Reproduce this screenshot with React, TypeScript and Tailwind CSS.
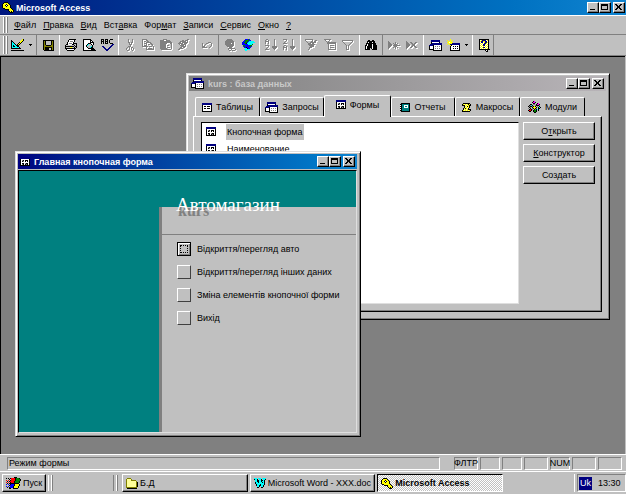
import { ReactNode } from 'react';
import { cva } from 'class-variance-authority';
import clsx from 'clsx';

const PALETTE: Record<string, string> = {
  k: '#000000',
  w: '#ffffff',
  g: '#808080',
  s: '#c0c0c0',
  n: '#000080',
  b: '#0000ff',
  t: '#008080',
  c: '#00ffff',
  y: '#ffff00',
  p: '#ffff99',
  o: '#808000',
  r: '#ff0000',
  e: '#008000',
  m: '#ff00ff',
};

// Each icon is a small bitmap, one letter of the palette per pixel
const ICONS = {
  key: [
    '..kkkk......',
    '.kyyyyk.....',
    'kyyykyyk....',
    'kyykwkyyk...',
    'kyyykyyyk...',
    'kyyyyyyyk...',
    '.kkyyyyyyk..',
    '...kkkkyyyk.',
    '......kyyyyk',
    '.......kykyk',
    '........kkk.',
  ],
  design: [
    '...........yk',
    'k.........yyk',
    'kk.......yyk.',
    'kck.....kyk..',
    'kcck...kyk...',
    'kccck.kyk....',
    'kckcckkk.....',
    'kckkcckk.....',
    'kccccccck....',
    'kkkkkkkkkk...',
    '.............',
    'kkkkkkkkkkkkk',
  ],
  save: [
    'kkkkkkkkkkk',
    'kokssssskok',
    'kokssssskok',
    'kokssssskok',
    'kokssssskok',
    'kookkkkkook',
    'koooooooook',
    'kokkkkkkkok',
    'kokkkksskok',
    'kokkkksskok',
    '.kkkkkkkkkk',
  ],
  print: [
    '....kkkkkkk..',
    '...kwwwwwk...',
    '...kwgggwk...',
    '..kwwwwwk....',
    '..kwgggwkkkk.',
    '.kkwwwwkkssk.',
    'kssssssssksk.',
    'kkkkkkkkkskk.',
    'kssssyyssksk.',
    'kkkkkkkkkkk..',
    '.kwwwwwwwk...',
    '..kkkkkkk....',
  ],
  preview: [
    'kkkkkkkk.....',
    'kwwwwwwkk....',
    'kwwwwwwkwk...',
    'kwwwwwwkkkk..',
    'kwwwwkkkwwk..',
    'kwwwkcsskwk..',
    'kwwkcssssk...',
    'kwwkssssck...',
    'kwwwkssckk...',
    'kwwwwkkkkkk..',
    'kwwwwwwwkkkk.',
    'kkkkkkkkkkkkk',
  ],
  spelling: [
    'kkk.kkk..kkk.',
    'k.k.k.k.k....',
    'kkk.kkk.k....',
    'k.k.k.k.k....',
    'k.k.kkk..kkk.',
    '...........nn',
    '..........nn.',
    '.nn......nn..',
    '..nn....nn...',
    '...nn..nn....',
    '....nnnn.....',
    '.....nn......',
  ],
  cut: [
    '..g...g.',
    '..g...g.',
    '..g...g.',
    '..gg.gg.',
    '...g.g..',
    '...ggg..',
    '....g...',
    '..ggg...',
    '.g.g.gg.',
    'g..g.g.g',
    'g..g.g.g',
    '.gg...g.',
  ],
  copy: [
    'ggggg.......',
    'g...gg......',
    'g.gg.gg.....',
    'g...ggggg...',
    'g.ggg...gg..',
    'g...g.gg.gg.',
    'g.ggg.....g.',
    'gggggg.ggg.g',
    '....g......g',
    '....g.gggg.g',
    '....gggggggg',
  ],
  paste: [
    '...gggg.....',
    'gggg..gggg..',
    'ggggggggggg.',
    'gggggggggggg',
    'ggggggg...gg',
    'gggggg.....g',
    'gggggg.gg..g',
    'gggggg.....g',
    'gggggg.ggg.g',
    'ggggggg....g',
    '.gggggggggg.',
  ],
  painter: [
    '.........gg.',
    '....gg.ggg..',
    '..gggggg.g..',
    '.gg.gggggg..',
    'ggggg.ggg...',
    '.g.ggggg....',
    '..gggg.g....',
    '...ggggg....',
    '..gg.gg.....',
    '.gggg.......',
    'gg..........',
  ],
  undo: [
    '......ggg.',
    'g...gg...g',
    'g..g.....g',
    'g.g......g',
    'ggg.....g.',
    'ggggg..g..',
  ],
  link: [
    '...ggggg....',
    '..ggggggg...',
    '.ggggggggg..',
    '.ggggggggg..',
    '.gggggg.gg..',
    '.ggggggggg..',
    '..gggggggg..',
    '...gggggg...',
    '.....ggg....',
    '....ggggggg.',
    '....g..g...g',
    '.....gg.ggg.',
  ],
  web: [
    '...bbbeb.....',
    '..beeeebb....',
    '.bbeeebccccc.',
    'bbeeebccccccc',
    'bbbekcccccc..',
    'bbbbbbcccce..',
    '.eebbbbbee...',
    '.bebbbbeeb...',
    '..bbkbbbb....',
    '...cckbb.....',
    '..cccccc.....',
    '...cc........',
  ],
  sortAsc: [
    '.gg......g..',
    'g..g.....g..',
    'gggg.....g..',
    'g..g.....g..',
    'g..g.....g..',
    '.........g..',
    'gggg.....g..',
    '...g...ggggg',
    '..g....ggggg',
    '.g......ggg.',
    'gggg.....g..',
  ],
  sortDesc: [
    'gggg.....g..',
    '...g.....g..',
    '..g......g..',
    '.g.......g..',
    'gggg.....g..',
    '.........g..',
    '.gg......g..',
    'g..g...ggggg',
    'gggg...ggggg',
    'g..g....ggg.',
    'g..g.....g..',
  ],
  filterSel: [
    'gggggggg.....',
    'g......g..gg.',
    '.g....gg.gg..',
    '..g..gggggg..',
    '...ggg.gg....',
    '...ggggggg...',
    '....ggggg....',
    '.....gggg....',
    '....ggg......',
    '....g........',
    '...g.........',
  ],
  filterForm: [
    'ggggggg.....',
    '.g...g......',
    '..g.g.......',
    '...ggggggggg',
    '...ggggggggg',
    '....g......g',
    '....g.gggg.g',
    '....g......g',
    '....g.gggg.g',
    '....g......g',
    '....gggggggg',
  ],
  filter: [
    'ggggggggggg',
    'g.........g',
    '.g.......g.',
    '..g.....g..',
    '...g...g...',
    '....g.g....',
    '....g.g....',
    '....g.g....',
    '....g.g....',
    '....ggg....',
  ],
  find: [
    '...kk..kk...',
    '..kkkkkkkk..',
    '..kwkkkwkk..',
    '.kkkkkkkkkk.',
    '.kwkkkkwkkk.',
    'kkwkkkkwkkkk',
    'kwkkkkkwkkkk',
    'kwkkkkkwkkkk',
    'kwkkk.kwkkkk',
    'kkkkk..kkkkk',
  ],
  newRecord: [
    'g...........',
    'gg.....g....',
    'ggg..g.g.g..',
    'gggg..ggg...',
    'gggg.ggggggg',
    'ggg...ggg...',
    'gg...g.g.g..',
    'g......g....',
  ],
  deleteRecord: [
    'g...........',
    'gg..gg...gg.',
    'ggg..gg.gg..',
    'gggg..ggg...',
    'gggg..ggg...',
    'ggg..gg.gg..',
    'gg..gg...gg.',
    'g...........',
  ],
  database: [
    '..nnnnnnnnn..',
    '..nnnnnnnnn..',
    '..kwwwwwwwk..',
    '..knnnnnnnnnn',
    '.nnnnnnnnnnnn',
    'nnnnkwwwwwwwk',
    'kwwwkwgwgwgwk',
    'kwwwkwwwwwwwk',
    'kwwwkwgwgwgwk',
    'kkkkkwwwwwwwk',
    '....kkkkkkkkk',
  ],
  newObject: [
    '...y.........',
    'y..y.y.......',
    '.yyyy........',
    'yywyyy.......',
    '.yyyynnnnnnnn',
    'y.ynnnnnnnnnn',
    '...ykwwwwwwwk',
    '...kwwkwkwkwk',
    '...kwwwwwwwwk',
    '...kwwkwkwkwk',
    '...kwwwwwwwwk',
    '...kkkkkkkkkk',
  ],
  help: [
    'kkkkkkkkkk.',
    'kwynnnnwyk.',
    'kynnyynnwk.',
    'kwnnwynnyk.',
    'kywywnnywk.',
    'kwywnnywyk.',
    'kywynnwywk.',
    'kwywywywyk.',
    'kywynnwywk.',
    'kwywywywyk.',
    'kkkkkkkkkkk',
    '......kwk..',
    '.......kk..',
  ],
  table: [
    'nnnnnnnnnn',
    'nnnnnnnnnn',
    'kwwwwwwwwk',
    'kwkkwkkkwk',
    'kwwwwwwwwk',
    'kwkkwkkkwk',
    'kwwwwwwwwk',
    'kwwwwwwwwk',
    'kkkkkkkkkk',
  ],
  form: [
    'nnnnnnnnnn',
    'nnnnnnnnnn',
    'kwwwwwwwwk',
    'kwgkwkkkwk',
    'kwkgwkwkwk',
    'kwwwwwwwwk',
    'kwkkwgkkwk',
    'kwgkwkgkwk',
    'kkkkkkkkkk',
  ],
  report: [
    '.kkkkkkkkk',
    'kktttttttk',
    'wkttwwwwtk',
    'kkttwttwtk',
    'wkttwwwwtk',
    'kktttttttk',
    'wktttttttk',
    'kktttttttk',
    '.kkkkkkkkk',
  ],
  macro: [
    '.kkkkkkk..',
    'kypypykyk.',
    'kkkpypykk.',
    '..kypkyk..',
    '..kpypyk..',
    '.kykypk...',
    '.kpypykkk.',
    'kypypypyk.',
    'kkkkkkkk..',
  ],
  module: [
    '.....km......',
    '....kmmk.....',
    '.....kk..km..',
    '..kk.gg.kmmk.',
    '.kgck..gkkkg.',
    'kgkkgkyk.g.k.',
    '.kg.kyyyk.kck',
    'g.k.gkykg.kk.',
    '.krkg.kgkck..',
    'krrk.keek.k..',
    '.kk..keek....',
    '......kk.....',
  ],
  windows: [
    '........kkk....',
    'k.k.krrrrkeeek.',
    '...k.rrrrkeeeek',
    'r.r.krrrrkeeeek',
    '.k.krrrrkeeeek.',
    'r.r.krrrkeeeek.',
    '.k.kkkkkkkkkk..',
    'b.b.kbbbkyyyyk.',
    '...kbbbbkyyyyk.',
    'b.b.bbbkyyyyk..',
    '.k.kbbbkyyyyk..',
    '...kk..kkkkk...',
  ],
  folder: [
    '.oooo.......',
    'oppppo......',
    'oppppooooo..',
    'opppppppppo.',
    'opppppppppok',
    'opppppppppok',
    'opppppppppok',
    'opppppppppok',
    'opppppppppok',
    'ooooooooooo.',
    '.kkkkkkkkkk.',
  ],
  word: [
    'ccc.ccc.cccc',
    'kcck.cck.cck',
    '.cckkcckkck.',
    '.cckkcckcck.',
    '.kcckccckck.',
    '.kcccccccck.',
    '..kccckccck.',
    '..kcckkcck..',
    '...cck.cck..',
    '...kk..kk...',
  ],
};

type IconName = keyof typeof ICONS;

interface PixelIconProps {
  name: IconName;
  disabled?: boolean;
}

function PixelIcon({ name, disabled }: PixelIconProps) {
  const rows: string[] = ICONS[name];
  const width = Math.max(...rows.map((row) => row.length)) + (disabled ? 1 : 0);
  const height = rows.length + (disabled ? 1 : 0);

  const draw = (offset: number, fill?: string) =>
    rows.flatMap((row, y) =>
      [...row].map((char, x) =>
        char === '.' ? null : (
          <rect
            key={`${offset}-${x}-${y}`}
            x={x + offset}
            y={y + offset}
            width="1"
            height="1"
            fill={fill || PALETTE[char]}
          />
        )
      )
    );

  return (
    <svg
      width={width}
      height={height}
      viewBox={`0 0 ${width} ${height}`}
      shapeRendering="crispEdges"
      className="shrink-0"
      aria-hidden="true"
    >
      {disabled && draw(1, '#ffffff')}
      {draw(0)}
    </svg>
  );
}

const raised =
  'border border-t-white border-l-white border-r-black border-b-black shadow-[inset_-1px_-1px_0_#808080]';
const sunken = 'border border-t-[#808080] border-l-[#808080] border-r-white border-b-white';

function CaptionButtons() {
  const button = clsx('flex h-[11px] w-3 items-center justify-center bg-[#c0c0c0]', raised);
  return (
    <div className="ml-auto flex">
      <button aria-label="Свернуть" className={button}>
        <svg width="8" height="7" shapeRendering="crispEdges">
          <path d="M1 5h5v1h-5z" />
        </svg>
      </button>
      <button aria-label="Развернуть" className={button}>
        <svg width="8" height="7" shapeRendering="crispEdges">
          <path d="M0 0h7v6h-7zM1 2v3h5v-3z" fillRule="evenodd" />
        </svg>
      </button>
      <button aria-label="Закрыть" className={clsx(button, 'ml-0.5')}>
        <svg width="8" height="7" shapeRendering="crispEdges">
          <path d="M0 0h2v1h1v1h1v-1h1v-1h2v1h-1v1h-1v2h1v1h1v1h-2v-1h-1v-1h-1v1h-1v1h-2v-1h1v-1h1v-2h-1v-1h-1z" />
        </svg>
      </button>
    </div>
  );
}

interface WindowProps {
  title: string;
  icon: IconName;
  active?: boolean;
  className: string;
  children: ReactNode;
}

function Window({ title, icon, active, className, children }: WindowProps) {
  return (
    <section
      className={clsx(
        'absolute flex flex-col border border-t-[#dfdfdf] border-l-[#dfdfdf] border-r-black border-b-black bg-[#c0c0c0] pb-[3px] pl-0.5 pr-[3px] pt-0.5 shadow-[inset_1px_1px_0_#fff,inset_-1px_-1px_0_#808080]',
        className
      )}
    >
      <header
        className={clsx(
          'flex h-[15px] shrink-0 items-center gap-1 px-0.5 font-bold',
          active
            ? 'bg-linear-to-r from-[#000080] to-[#1084d0] text-white'
            : 'bg-linear-to-r from-[#808080] to-[#b8b4b8] text-[#c8c8c8]'
        )}
      >
        <PixelIcon name={icon} />
        <h2>{title}</h2>
        <CaptionButtons />
      </header>
      {children}
    </section>
  );
}

function Grip() {
  return (
    <div className="flex gap-px self-stretch py-px">
      <div className="w-0.5 border-l border-l-white bg-[#808080]" />
      <div className="w-0.5 border-l border-l-white bg-[#808080]" />
    </div>
  );
}

const menuItems = [
  { hot: 'Ф', rest: 'айл' },
  { hot: 'П', rest: 'равка' },
  { hot: 'В', rest: 'ид' },
  { pre: 'Вст', hot: 'а', rest: 'вка' },
  { pre: 'Фор', hot: 'м', rest: 'ат' },
  { hot: 'З', rest: 'аписи' },
  { hot: 'С', rest: 'ервис' },
  { hot: 'О', rest: 'кно' },
  { hot: '?', rest: '' },
];

interface Tool {
  icon: IconName;
  label: string;
  disabled?: boolean;
  arrow?: boolean;
}

const toolGroups: Tool[][] = [
  [{ icon: 'design', label: 'Вид', arrow: true }],
  [{ icon: 'save', label: 'Сохранить' }],
  [
    { icon: 'print', label: 'Печать' },
    { icon: 'preview', label: 'Предварительный просмотр' },
    { icon: 'spelling', label: 'Орфография' },
  ],
  [
    { icon: 'cut', label: 'Вырезать', disabled: true },
    { icon: 'copy', label: 'Копировать', disabled: true },
    { icon: 'paste', label: 'Вставить', disabled: true },
    { icon: 'painter', label: 'Формат по образцу', disabled: true },
  ],
  [{ icon: 'undo', label: 'Отменить', disabled: true }],
  [
    { icon: 'link', label: 'Гиперссылка', disabled: true },
    { icon: 'web', label: 'Веб' },
  ],
  [
    { icon: 'sortAsc', label: 'По возрастанию', disabled: true },
    { icon: 'sortDesc', label: 'По убыванию', disabled: true },
  ],
  [
    { icon: 'filterSel', label: 'Фильтр по выделенному', disabled: true },
    { icon: 'filterForm', label: 'Изменить фильтр', disabled: true },
    { icon: 'filter', label: 'Применить фильтр', disabled: true },
  ],
  [{ icon: 'find', label: 'Найти' }],
  [
    { icon: 'newRecord', label: 'Новая запись', disabled: true },
    { icon: 'deleteRecord', label: 'Удалить запись', disabled: true },
  ],
  [
    { icon: 'database', label: 'Окно базы данных' },
    { icon: 'newObject', label: 'Новый объект', arrow: true },
  ],
  [{ icon: 'help', label: 'Справка' }],
];

function Toolbar() {
  return (
    <div className="flex h-[22px] items-center border-y border-y-[#808080] pl-[3px]">
      <Grip />
      <div className="flex h-full border-r border-r-[#808080]">
        {toolGroups.map((group, index) => (
          <div key={index} className="flex">
            {index > 0 && (
              <div className="flex w-[5px] justify-center">
                <div
                  className={clsx('w-px', [1, 5, 9].includes(index) ? 'bg-[#808080]' : 'bg-white')}
                />
              </div>
            )}
            {group.map((tool) => (
              <div key={tool.icon} className="flex">
                <button
                  aria-label={tool.label}
                  disabled={tool.disabled}
                  className="flex w-[18px] items-center justify-center"
                >
                  <PixelIcon name={tool.icon} disabled={tool.disabled} />
                </button>
                {tool.arrow && (
                  <button
                    aria-label={`${tool.label}: список`}
                    className="flex w-2 items-center justify-center"
                  >
                    <svg width="3" height="2" shapeRendering="crispEdges">
                      <path d="M0 0h3v1h-1v1h-1v-1h-1z" />
                    </svg>
                  </button>
                )}
              </div>
            ))}
          </div>
        ))}
      </div>
    </div>
  );
}

const tabs: { icon: IconName; label: string; width: string }[] = [
  { icon: 'table', label: 'Таблицы', width: 'w-[65px]' },
  { icon: 'database', label: 'Запросы', width: 'w-16' },
  { icon: 'form', label: 'Формы', width: 'w-[67px]' },
  { icon: 'report', label: 'Отчеты', width: 'w-16' },
  { icon: 'macro', label: 'Макросы', width: 'w-[65px]' },
  { icon: 'module', label: 'Модули', width: 'w-[65px]' },
];

const objectButtons = [
  { pre: 'О', hot: 'т', rest: 'крыть' },
  { pre: '', hot: 'К', rest: 'онструктор' },
  { pre: 'Соз', hot: 'д', rest: 'ать' },
];

function DatabaseWindow() {
  return (
    <Window
      title="kurs : база данных"
      icon="database"
      className="left-[185px] top-4 h-[247px] w-[424px]"
    >
      <div className="flex flex-1 flex-col p-1">
        <div className="flex items-end pl-0.5" role="tablist">
          {tabs.map((tab, index) => {
            const selected = index === 2;
            return (
              <button
                key={tab.label}
                role="tab"
                aria-selected={selected}
                className={clsx(
                  'flex items-center justify-center gap-1 rounded-t-xs border border-b-0 border-t-white border-l-white border-r-black bg-[#c0c0c0]',
                  tab.width,
                  selected ? 'relative -mb-px h-[22px] pb-1' : 'h-[19px]'
                )}
              >
                <PixelIcon name={tab.icon} />
                {tab.label}
              </button>
            );
          })}
        </div>
        <div className={clsx('flex flex-1 gap-1 pb-[7px] pl-[7px] pr-1.5 pt-[5px]', raised)}>
          <ul className="flex-1 border border-t-black border-l-black border-r-[#dfdfdf] border-b-[#dfdfdf] bg-white pl-1">
            {['Кнопочная форма', 'Наименование'].map((name, index) => (
              <li key={name} className="flex h-[17px] items-center gap-2.5">
                <PixelIcon name="form" />
                <span className={clsx('px-px leading-4', index === 0 && 'bg-[#c0c0c0]')}>
                  {name}
                </span>
              </li>
            ))}
          </ul>
          <div className="flex w-[72px] flex-col gap-1">
            {objectButtons.map((button) => (
              <button key={button.rest} className={clsx('h-[18px] w-full bg-[#c0c0c0]', raised)}>
                {button.pre}
                <u>{button.hot}</u>
                {button.rest}
              </button>
            ))}
          </div>
        </div>
      </div>
    </Window>
  );
}

const commands = [
  'Відкриття/перегляд авто',
  'Відкриття/перегляд інших даних',
  'Зміна елементів кнопочної форми',
  'Вихід',
];

function SwitchboardWindow() {
  return (
    <Window
      title="Главная кнопочная форма"
      icon="form"
      active
      className="left-3.5 top-[94px] h-[286px] w-[346px]"
    >
      <div className="mt-px flex flex-1 flex-col border border-t-black border-l-black border-r-[#dfdfdf] border-b-[#dfdfdf] bg-[#008080] pt-9">
        <div className="flex flex-1 pl-[140px]">
          <div className="flex-1 border-l-[3px] border-l-[#808080] bg-[#c0c0c0]">
            <div className="relative h-7 border-b border-b-[#808080]">
              {/* Old form name, half hidden behind the heading */}
              <span
                className="absolute -top-1.5 left-4 text-base font-bold leading-5 text-[#808080] [font-family:'Liberation_Serif',serif]"
                aria-hidden="true"
              >
                kurs
              </span>
              <h1 className="absolute -top-3.5 left-3.5 whitespace-nowrap text-[19px] leading-6 text-white [font-family:'Liberation_Serif',serif]">
                Автомагазин
              </h1>
            </div>
            <ul className="flex flex-col gap-[9px] pl-[15px] pt-[7px]">
              {commands.map((command, index) => (
                <li key={command} className="flex h-3.5 items-center gap-1.5 whitespace-nowrap">
                  <button
                    id={`command-${index}`}
                    aria-labelledby={`label-${index}`}
                    className={clsx(
                      'flex h-3.5 w-3.5 shrink-0 items-center justify-center bg-[#c0c0c0]',
                      index === 0
                        ? 'border border-black shadow-[inset_1px_1px_0_#fff,inset_-1px_-1px_0_#808080]'
                        : 'border border-t-white border-l-white border-r-[#404040] border-b-[#404040]'
                    )}
                  >
                    {index === 0 && <span className="h-2 w-2 border border-dotted border-black" />}
                  </button>
                  <label id={`label-${index}`} htmlFor={`command-${index}`}>
                    {command}
                  </label>
                </li>
              ))}
            </ul>
          </div>
        </div>
      </div>
    </Window>
  );
}

const indicators = [
  { text: 'ФЛТР', width: 'w-6' },
  { text: '', width: 'w-5' },
  { text: '', width: 'w-5' },
  { text: '', width: 'w-6' },
  { text: 'NUM', width: 'w-5' },
  { text: '', width: 'w-6' },
  { text: '', width: 'w-6' },
];

function StatusBar() {
  return (
    <footer className="flex h-[17px] items-center border-t border-t-white pl-[7px] pr-1">
      <div className={clsx('mr-3.5 h-[13px] flex-1 px-px leading-[11px]', sunken)}>Режим формы</div>
      <div className="flex gap-0.5">
        {indicators.map((indicator, index) => (
          <div
            key={index}
            className={clsx(
              'flex h-[13px] items-center justify-center leading-[11px]',
              sunken,
              indicator.width
            )}
          >
            {indicator.text}
          </div>
        ))}
      </div>
    </footer>
  );
}

const taskButton = cva('flex h-[18px] items-center gap-0.5 pl-[3px] whitespace-nowrap', {
  variants: {
    pressed: {
      true: 'border border-t-black border-l-black border-r-white border-b-white bg-[repeating-conic-gradient(#fff_0_25%,#c0c0c0_0_50%)] bg-[length:2px_2px] font-bold',
      false: clsx('bg-[#c0c0c0]', raised),
    },
  },
});

function Taskbar() {
  return (
    <nav className="flex h-[23px] items-center border-t border-t-white pl-0.5">
      <button className={clsx(taskButton({ pressed: false }), 'w-11')}>
        <PixelIcon name="windows" />
        Пуск
      </button>
      <div className="ml-0.5 flex h-4 w-[66px] border-l border-r border-l-white border-r-[#808080] pl-0.5">
        <div className="w-0.5 border-l border-l-white bg-[#808080]" />
      </div>
      <div className="ml-0.5 mr-1 h-4 w-0.5 border-l border-l-white bg-[#808080]" />
      <div className="flex min-w-0 flex-1 gap-0.5">
        <button className={clsx(taskButton({ pressed: false }), 'min-w-0 flex-1')}>
          <PixelIcon name="folder" />
          Б.Д
        </button>
        <button className={clsx(taskButton({ pressed: false }), 'min-w-0 flex-1')}>
          <PixelIcon name="word" />
          Microsoft Word - XXX.doc
        </button>
        <button className={clsx(taskButton({ pressed: true }), 'min-w-0 flex-1')}>
          <PixelIcon name="key" />
          Microsoft Access
        </button>
      </div>
      <div className="ml-[71px] mr-0.5 h-[18px] w-px bg-white" />
      <div className={clsx('flex h-[18px] w-[49px] items-center gap-1.5 pl-px', sunken)}>
        <span className="flex h-[13px] w-[13px] items-center justify-center bg-[#000080] text-white">
          Uk
        </span>
        <time>13:30</time>
      </div>
    </nav>
  );
}

export default function App() {
  return (
    <div className="flex min-h-screen cursor-default flex-col overflow-hidden bg-[#c0c0c0] text-[9px] leading-3 text-black [font-family:'Liberation_Sans',sans-serif]">
      <header className="flex h-[15px] items-center gap-0.5 bg-linear-to-r from-[#00177f] to-[#1084d0] pl-0.5 pr-px font-bold text-white">
        <PixelIcon name="key" />
        <h1>Microsoft Access</h1>
        <CaptionButtons />
      </header>

      <div className="flex h-[19px] items-center border-t border-t-white pl-[3px]">
        <Grip />
        <nav className="flex gap-[7px] pl-1.5">
          {menuItems.map((item) => (
            <button key={item.hot + item.rest}>
              {item.pre}
              <u>{item.hot}</u>
              {item.rest}
            </button>
          ))}
        </nav>
      </div>

      <Toolbar />

      <main className="relative mr-px flex-1 border-l border-t border-l-black border-t-black bg-[#808080]">
        <DatabaseWindow />
        <SwitchboardWindow />
      </main>

      <StatusBar />
      <Taskbar />
    </div>
  );
}
